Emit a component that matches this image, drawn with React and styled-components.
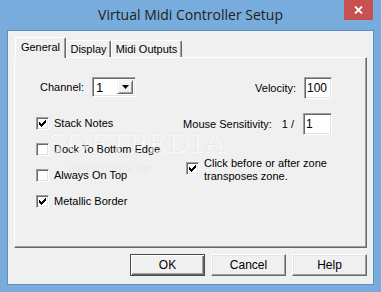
import React from 'react';
import styled, { createGlobalStyle } from 'styled-components';

const Global = createGlobalStyle`
  html, body { margin: 0; padding: 0; }
  body { background: #78acdc; font-family: "Liberation Sans", Arial, sans-serif; }
  #root { width: 381px; height: 292px; }
`;

const Window = styled.div`
  position: relative;
  width: 381px;
  height: 292px;
  box-sizing: border-box;
  background: #78acdc;
  display: flex;
  flex-direction: column;
  padding: 0 8px 8px 8px;
`;

const TitleBar = styled.div`
  height: 31px;
  display: grid;
  grid-template-columns: 1fr auto 1fr;
  align-items: start;
`;

const Title = styled.div`
  grid-column: 2;
  font-family: "Open Sans", "Noto Sans", sans-serif;
  font-size: 14px;
  line-height: 20px;
  padding-top: 5px;
  color: #1e1e1e;
  white-space: nowrap;
`;

const CloseButton = styled.div`
  grid-column: 3;
  justify-self: end;
  width: 29px;
  height: 20px;
  background: #c75050;
  display: flex;
  align-items: center;
  justify-content: center;
`;

const Client = styled.div`
  flex: 1;
  background: #f0f0f0;
  box-shadow: 0 0 0 1px #5f8fbf;
  display: flex;
  flex-direction: column;
  padding: 6px 6px 8px 6px;
`;

const TabRow = styled.div`
  display: flex;
  align-items: flex-end;
  height: 20px;
  padding-left: 1px;
  position: relative;
  z-index: 1;
`;

const Tab = styled.div`
  box-sizing: border-box;
  width: ${p => p.$w}px;
  height: ${p => (p.$active ? 21 : 17)}px;
  margin-bottom: ${p => (p.$active ? -1 : 0)}px;
  background: #f0f0f0;
  border-top: 1px solid #fff;
  border-left: 1px solid #fff;
  border-right: 1px solid #696969;
  box-shadow: inset -1px 0 0 #a0a0a0;
  border-top-left-radius: 2px;
  border-top-right-radius: 2px;
  font-size: 11px;
  color: #000;
  display: flex;
  justify-content: center;
  padding-top: ${p => (p.$active ? 3 : 2)}px;
  line-height: 13px;
`;

const Panel = styled.div`
  position: relative;
  height: 191px;
  box-sizing: border-box;
  border-top: 1px solid #fff;
  border-left: 1px solid #fff;
  border-right: 1px solid #696969;
  border-bottom: 1px solid #696969;
  box-shadow: inset -1px -1px 0 #a0a0a0;
  display: flex;
  justify-content: space-between;
  padding: 19px 34px 0 21px;
  font-size: 11px;
  color: #000;
`;

const LeftCol = styled.div`
  display: flex;
  flex-direction: column;
`;

const RightCol = styled.div`
  width: 146px;
  display: flex;
  flex-direction: column;
  align-items: flex-end;
`;

const FieldRow = styled.div`
  display: flex;
  align-items: center;
  height: ${p => p.$h}px;
  margin-left: ${p => p.$ml || 0}px;
  margin-bottom: ${p => p.$mb || 0}px;
`;

const Label = styled.span`
  margin-right: ${p => p.$mr}px;
  white-space: nowrap;
`;

const Sunken = styled.div`
  box-sizing: border-box;
  width: ${p => p.$w}px;
  height: ${p => p.$h}px;
  background: #fff;
  border: 1px solid;
  border-color: #a0a0a0 #fff #fff #a0a0a0;
  box-shadow: inset 1px 1px 0 #696969, inset -1px -1px 0 #e3e3e3;
  display: flex;
  align-items: center;
  padding-left: 2px;
  font-size: 12px;
`;

const Combo = styled(Sunken)`
  justify-content: space-between;
  padding: 2px 2px 2px 3px;
  align-items: stretch;
`;

const ComboText = styled.span`
  display: flex;
  align-items: center;
  font-size: 13px;
`;

const ComboButton = styled.div`
  width: 16px;
  box-sizing: border-box;
  background: #f0f0f0;
  border: 1px solid;
  border-color: #f0f0f0 #696969 #696969 #f0f0f0;
  box-shadow: inset 1px 1px 0 #fff, inset -1px -1px 0 #a0a0a0;
  display: flex;
  align-items: center;
  justify-content: center;
`;

const CheckList = styled.div`
  display: flex;
  flex-direction: column;
  gap: 13px;
  margin-top: 20px;
`;

const CheckRow = styled.div`
  display: flex;
  align-items: ${p => (p.$top ? 'flex-start' : 'center')};
  height: ${p => (p.$top ? 'auto' : '13px')};
  align-self: ${p => (p.$start ? 'flex-start' : 'auto')};
  margin-top: ${p => p.$mt || 0}px;
`;

const Box = styled.div`
  box-sizing: border-box;
  width: 13px;
  height: 13px;
  flex: none;
  background: #fff;
  border: 1px solid;
  border-color: #a0a0a0 #fff #fff #a0a0a0;
  box-shadow: inset 1px 1px 0 #696969, inset -1px -1px 0 #e3e3e3;
  margin-top: ${p => p.$mt || 0}px;
  display: flex;
  align-items: flex-start;
  justify-content: flex-start;
  padding: 2px 0 0 2px;
`;

const CheckText = styled.span`
  margin-left: 5px;
  line-height: 13px;
  white-space: nowrap;
`;

const ButtonRow = styled.div`
  display: flex;
  justify-content: flex-end;
  gap: 6px;
  margin-top: 6px;
`;

const Button = styled.div`
  box-sizing: border-box;
  width: 75px;
  height: 22px;
  background: #f0f0f0;
  border: 1px solid;
  border-color: ${p => (p.$default ? '#4a4a4a' : '#fff #696969 #696969 #fff')};
  box-shadow: ${p =>
    p.$default
      ? 'inset 1px 1px 0 #fff, inset -1px -1px 0 #696969, inset -2px -2px 0 #a0a0a0'
      : 'inset -1px -1px 0 #a0a0a0, inset 1px 1px 0 #e3e3e3'};
  display: flex;
  align-items: center;
  justify-content: center;
  font-size: 12px;
  color: #000;
`;

const Watermark = styled.div`
  position: absolute;
  left: 32px;
  top: 67px;
  font-family: "Liberation Serif", serif;
  font-size: 30px;
  letter-spacing: 2px;
  color: rgba(0, 0, 0, 0.035);
  text-shadow: 1px 1px 0 rgba(255, 255, 255, 0.6);
  pointer-events: none;
`;

const WatermarkUrl = styled.div`
  position: absolute;
  left: 53px;
  top: 105px;
  font-size: 10px;
  color: rgba(0, 0, 0, 0.06);
  pointer-events: none;
`;

const CHECK_PIXELS = [
  [6, 0], [5, 1], [6, 1], [0, 2], [4, 2], [5, 2], [6, 2],
  [0, 3], [1, 3], [3, 3], [4, 3], [5, 3],
  [0, 4], [1, 4], [2, 4], [3, 4], [4, 4],
  [1, 5], [2, 5], [3, 5], [2, 6],
];

function CheckMark() {
  return (
    <svg width="7" height="7" viewBox="0 0 7 7" shapeRendering="crispEdges">
      {CHECK_PIXELS.map(([x, y]) => (
        <rect key={`${x}-${y}`} x={x} y={y} width="1" height="1" fill="#000" />
      ))}
    </svg>
  );
}

function CheckBox({ checked, mt }) {
  return <Box $mt={mt}>{checked && <CheckMark />}</Box>;
}

export default function App() {
  return (
    <>
      <Global />
      <Window>
        <TitleBar>
          <Title>Virtual Midi Controller Setup</Title>
          <CloseButton>
            <svg width="9" height="8" viewBox="0 0 9 8">
              <path d="M1 0.5 L8 7.5 M8 0.5 L1 7.5" stroke="#fff" strokeWidth="1.8" />
            </svg>
          </CloseButton>
        </TitleBar>
        <Client>
          <TabRow>
            <Tab $w={51} $active>General</Tab>
            <Tab $w={45}>Display</Tab>
            <Tab $w={71}>Midi Outputs</Tab>
          </TabRow>
          <Panel>
            <Watermark>SOFTPEDIA</Watermark>
            <WatermarkUrl>www.softpedia.com</WatermarkUrl>
            <LeftCol>
              <FieldRow $h={20} $ml={4}>
                <Label $mr={8}>Channel:</Label>
                <Combo $w={44} $h={20}>
                  <ComboText>1</ComboText>
                  <ComboButton>
                    <svg width="7" height="4" viewBox="0 0 7 4">
                      <path d="M0 0 H7 L3.5 4 Z" fill="#000" />
                    </svg>
                  </ComboButton>
                </Combo>
              </FieldRow>
              <CheckList>
                <CheckRow>
                  <CheckBox checked />
                  <CheckText>Stack Notes</CheckText>
                </CheckRow>
                <CheckRow>
                  <CheckBox />
                  <CheckText>Dock To Bottom Edge</CheckText>
                </CheckRow>
                <CheckRow>
                  <CheckBox />
                  <CheckText>Always On Top</CheckText>
                </CheckRow>
                <CheckRow>
                  <CheckBox checked />
                  <CheckText>Metallic Border</CheckText>
                </CheckRow>
              </CheckList>
            </LeftCol>
            <RightCol>
              <FieldRow $h={22} $mb={14}>
                <Label $mr={8}>Velocity:</Label>
                <Sunken $w={28} $h={22}>100</Sunken>
              </FieldRow>
              <FieldRow $h={22}>
                <Label $mr={10}>Mouse Sensitivity:</Label>
                <Label $mr={9}>1 /</Label>
                <Sunken $w={29} $h={22}>1</Sunken>
              </FieldRow>
              <CheckRow $top $start $mt={22}>
                <CheckBox checked mt={5} />
                <CheckText>
                  Click before or after zone
                  <br />
                  transposes zone.
                </CheckText>
              </CheckRow>
            </RightCol>
          </Panel>
          <ButtonRow>
            <Button $default>OK</Button>
            <Button>Cancel</Button>
            <Button>Help</Button>
          </ButtonRow>
        </Client>
      </Window>
    </>
  );
}
